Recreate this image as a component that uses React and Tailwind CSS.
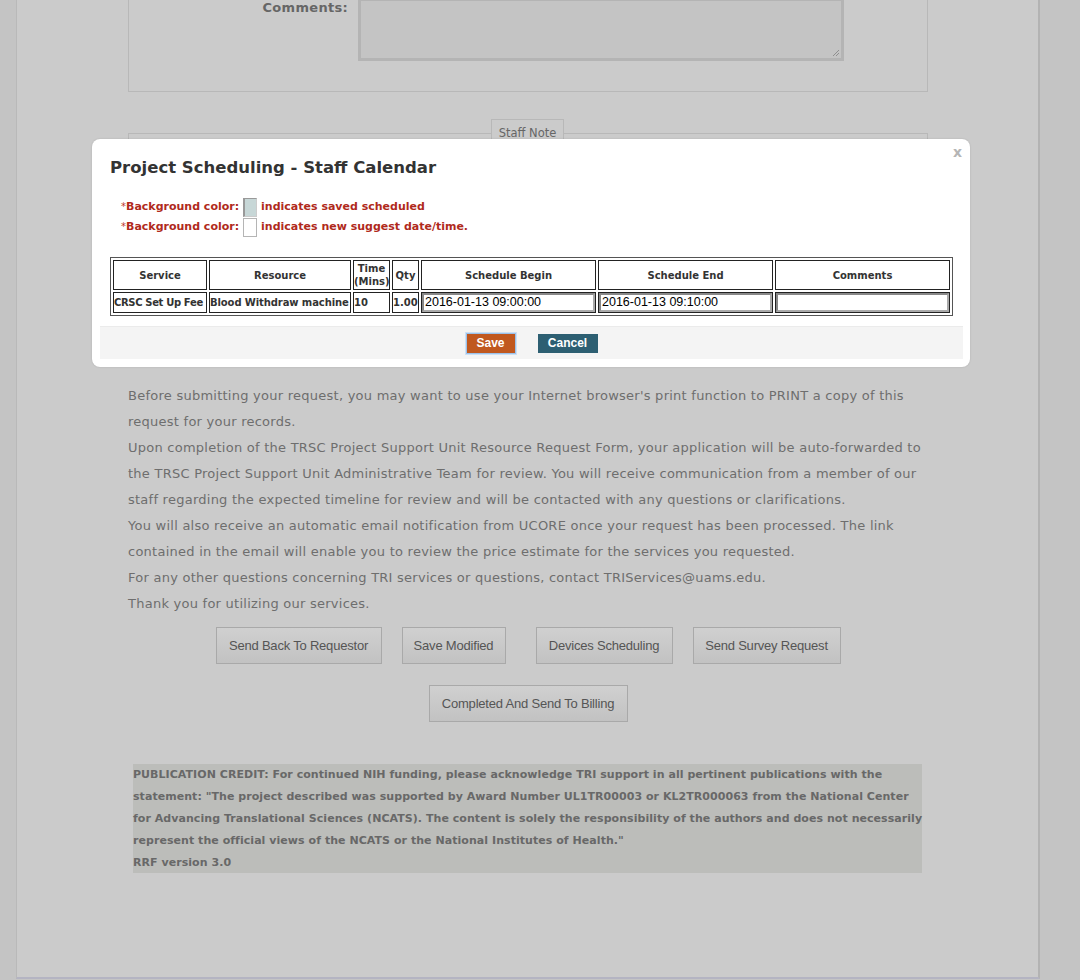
import React from 'react';

const verdana = { fontFamily: '"DejaVu Sans", Verdana, sans-serif' };
const arial = { fontFamily: '"Liberation Sans", Arial, sans-serif' };

const paragraphLines = [
  "Before submitting your request, you may want to use your Internet browser's print function to PRINT a copy of this",
  'request for your records.',
  'Upon completion of the TRSC Project Support Unit Resource Request Form, your application will be auto-forwarded to',
  'the TRSC Project Support Unit Administrative Team for review. You will receive communication from a member of our',
  'staff regarding the expected timeline for review and will be contacted with any questions or clarifications.',
  'You will also receive an automatic email notification from UCORE once your request has been processed. The link',
  'contained in the email will enable you to review the price estimate for the services you requested.',
  'For any other questions concerning TRI services or questions, contact TRIServices@uams.edu.',
  'Thank you for utilizing our services.'
];

const creditLines = [
  'PUBLICATION CREDIT: For continued NIH funding, please acknowledge TRI support in all pertinent publications with the',
  'statement: "The project described was supported by Award Number UL1TR00003 or KL2TR000063 from the National Center',
  'for Advancing Translational Sciences (NCATS). The content is solely the responsibility of the authors and does not necessarily',
  'represent the official views of the NCATS or the National Institutes of Health."',
  'RRF version 3.0'
];

const PageButton = ({ children, className = '' }) => (
  <button
    className={`h-[37px] border border-[#a9a9a9] bg-gradient-to-b from-[#d0d0d0] to-[#c2c2c2] text-[13px] text-[#555] tracking-[-0.2px] ${className}`}
    style={arial}
  >
    {children}
  </button>
);

const ScheduleModal = () => (
  <div className="absolute left-[92px] top-[139px] w-[878px] h-[228px] rounded-[8px] bg-white shadow-[0_0_2px_rgba(0,0,0,0.15)]">
    <span className="absolute right-[8px] top-[3px] text-[14px] font-bold text-[#b5b5b5]" style={verdana}>
      x
    </span>
    <h2 className="pl-[18px] pt-[17px] h-[41px] text-[16.5px] leading-[24px] font-bold text-[#333]" style={verdana}>
      Project Scheduling - Staff Calendar
    </h2>
    <div className="pl-[29px] pt-[17px] text-[11px] leading-[20px] font-bold text-[#b02a1c]" style={verdana}>
      <div className="flex items-center h-[20px]">
        <span className="font-normal text-[10px] text-[#c0392b]">*</span>
        <span>Background color:</span>
        <span className="mx-[4px] inline-block w-[14px] h-[19px] bg-[#c7d7d7] border-l-2 border-t border-[#999] border-r border-b border-r-[#ccc] border-b-[#ccc]"></span>
        <span>indicates saved scheduled</span>
      </div>
      <div className="flex items-center h-[20px]">
        <span className="font-normal text-[10px] text-[#c0392b]">*</span>
        <span>Background color:</span>
        <span className="mx-[4px] inline-block w-[14px] h-[19px] bg-white border border-[#b5b5b5]"></span>
        <span>indicates new suggest date/time.</span>
      </div>
    </div>
    <div className="pl-[18px] pr-[17px] pt-[20px]">
      <table
        className="table-fixed w-[843px] border border-[#555] border-separate border-spacing-[2px] text-[10px] text-[#333]"
        style={verdana}
      >
        <colgroup>
          <col className="w-[94px]" />
          <col className="w-[142px]" />
          <col className="w-[37px]" />
          <col className="w-[27px]" />
          <col className="w-[175px]" />
          <col className="w-[175px]" />
          <col className="w-[175px]" />
        </colgroup>
        <thead>
          <tr className="h-[30px]">
            <th className="border border-[#222] font-bold leading-[13px]">Service</th>
            <th className="border border-[#222] font-bold leading-[13px]">Resource</th>
            <th className="border border-[#222] font-bold leading-[13px] px-0">
              Time
              <br />
              (Mins)
            </th>
            <th className="border border-[#222] font-bold leading-[13px]">Qty</th>
            <th className="border border-[#222] font-bold leading-[13px]">Schedule Begin</th>
            <th className="border border-[#222] font-bold leading-[13px]">Schedule End</th>
            <th className="border border-[#222] font-bold leading-[13px]">Comments</th>
          </tr>
        </thead>
        <tbody>
          <tr className="h-[21px]">
            <td className="border border-[#222] font-bold whitespace-nowrap overflow-hidden px-0 tracking-[-0.35px]">
              CRSC Set Up Fee
            </td>
            <td className="border border-[#222] font-bold whitespace-nowrap overflow-hidden px-0 tracking-[-0.1px]">
              Blood Withdraw machine
            </td>
            <td className="border border-[#222] font-bold px-0">10</td>
            <td className="border border-[#222] font-bold px-0">1.00</td>
            <td className="border border-[#222] p-0">
              <div className="h-[19px] border-2 border-t-[#888] border-l-[#888] border-b-[#aaa] border-r-[#aaa] pl-[1px] text-[12.5px] leading-[15px] text-black" style={arial}>
                2016-01-13 09:00:00
              </div>
            </td>
            <td className="border border-[#222] p-0">
              <div className="h-[19px] border-2 border-t-[#888] border-l-[#888] border-b-[#aaa] border-r-[#aaa] pl-[1px] text-[12.5px] leading-[15px] text-black" style={arial}>
                2016-01-13 09:10:00
              </div>
            </td>
            <td className="border border-[#222] p-0">
              <div className="h-[19px] border-2 border-t-[#888] border-l-[#888] border-b-[#aaa] border-r-[#aaa]"></div>
            </td>
          </tr>
        </tbody>
      </table>
    </div>
    <div className="mx-[8px] mt-[10px] w-[863px] h-[33px] bg-[#f4f4f4] border-t border-[#ebebeb] flex items-center justify-center gap-[22px]">
      <button
        className="w-[50px] h-[21px] bg-[#c0581f] text-white text-[12px] font-bold border border-[#9cc2ea] outline outline-1 outline-[#cde0f4]"
        style={arial}
      >
        Save
      </button>
      <button className="w-[60px] h-[19px] bg-[#2d5f72] text-white text-[12px] font-bold" style={arial}>
        Cancel
      </button>
    </div>
  </div>
);

export default function App() {
  return (
    <div className="relative w-[1080px] h-[980px] overflow-hidden bg-[#c4c4c4]">
      <div className="ml-[16px] w-[1024px] h-[979px] bg-[#cbcbcb] border-l border-[#b9b9b9] border-r-2 border-r-[#b3b3b3] border-b-2 border-b-[#b4b4c2] overflow-hidden">
        <div className="pl-[111px] w-[911px]">
          {/* comments fieldset, scrolled past the top */}
          <div className="-mt-[30px] w-[800px] h-[122px] border border-[#b8b8b8] pt-[27px]">
            <div className="flex">
              <div
                className="w-[229px] pr-[10px] pt-0 text-right text-[13px] leading-[20px] font-bold text-[#666] tracking-[0.3px]"
                style={verdana}
              >
                Comments:
              </div>
              <div className="w-[486px] h-[63px] bg-[#c4c4c4] border-[3px] border-[#b4b4b4] relative">
                <svg className="absolute right-[1px] bottom-[1px]" width="8" height="8" viewBox="0 0 8 8">
                  <path d="M7 1 L1 7 M7 4 L4 7" stroke="#8f8f8f" strokeWidth="1" />
                </svg>
              </div>
            </div>
          </div>

          {/* staff note fieldset, mostly hidden by the modal */}
          <div className="relative mt-[41px] w-[800px] h-[220px] border border-[#b8b8b8]">
            <div
              className="absolute left-[362px] -top-[15px] w-[73px] h-[30px] bg-[#cbcbcb] border border-[#b8b8b8] text-center text-[11.5px] leading-[26px] text-[#666]"
              style={verdana}
            >
              Staff Note
            </div>
          </div>

          <div
            className="mt-[30px] text-[13px] leading-[26px] text-[#6e6e6e] whitespace-nowrap tracking-[0.25px]"
            style={verdana}
          >
            {paragraphLines.map((line) => (
              <div key={line}>{line}</div>
            ))}
          </div>

          <div className="mt-[10px] w-[800px] flex justify-center">
            <PageButton className="w-[166px] mr-[20px]">Send Back To Requestor</PageButton>
            <PageButton className="w-[104px] mr-[30px]">Save Modified</PageButton>
            <PageButton className="w-[137px] mr-[20px]">Devices Scheduling</PageButton>
            <PageButton className="w-[148px]">Send Survey Request</PageButton>
          </div>
          <div className="mt-[21px] w-[800px] flex justify-center">
            <PageButton className="w-[199px]">Completed And Send To Billing</PageButton>
          </div>

          <div
            className="mt-[42px] ml-[5px] w-[789px] h-[109px] bg-[#bcbdba] text-[11px] leading-[22px] font-bold text-[#686868] whitespace-nowrap tracking-[0.05px]"
            style={verdana}
          >
            {creditLines.map((line) => (
              <div key={line}>{line}</div>
            ))}
          </div>
        </div>
      </div>

      <ScheduleModal />
    </div>
  );
}
